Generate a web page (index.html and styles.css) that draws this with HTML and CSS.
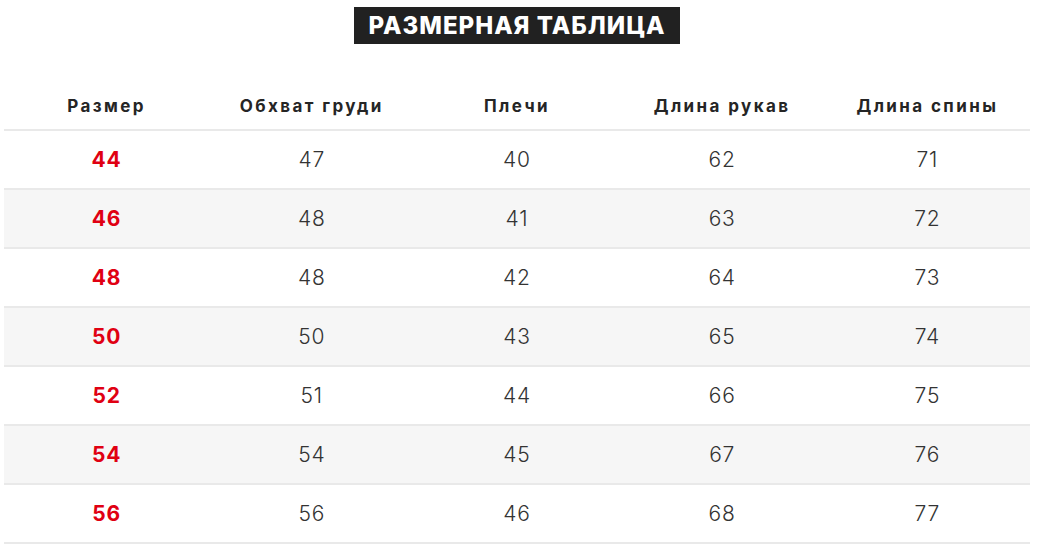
FILE: index.html
```html
<!DOCTYPE html>
<html lang="ru">
<head>
<meta charset="utf-8">
<link rel="stylesheet" href="styles.css">
</head>
<body>
<div class="page">
  <div class="title-wrap"><h1 class="title">РАЗМЕРНАЯ ТАБЛИЦА</h1></div>
  <table class="sizes">
    <thead>
      <tr><th>Размер</th><th>Обхват груди</th><th>Плечи</th><th>Длина рукав</th><th>Длина спины</th></tr>
    </thead>
    <tbody>
      <tr><td class="size">44</td><td>47</td><td>40</td><td>62</td><td>71</td></tr>
      <tr><td class="size">46</td><td>48</td><td>41</td><td>63</td><td>72</td></tr>
      <tr><td class="size">48</td><td>48</td><td>42</td><td>64</td><td>73</td></tr>
      <tr><td class="size">50</td><td>50</td><td>43</td><td>65</td><td>74</td></tr>
      <tr><td class="size">52</td><td>51</td><td>44</td><td>66</td><td>75</td></tr>
      <tr><td class="size">54</td><td>54</td><td>45</td><td>67</td><td>76</td></tr>
      <tr><td class="size">56</td><td>56</td><td>46</td><td>68</td><td>77</td></tr>
    </tbody>
  </table>
</div>
</body>
</html>
```
FILE: styles.css
```css
html, body {
  margin: 0;
  padding: 0;
  background: #fff;
}
.page {
  width: 1026px;
  margin-left: 4px;
  font-family: "Inter", "DejaVu Sans", sans-serif;
  color: #333;
}
.title-wrap {
  display: flex;
  justify-content: center;
  padding-top: 7px;
}
.title {
  margin: 0;
  background: #212121;
  color: #fff;
  font-size: 24px;
  font-weight: 800;
  line-height: 37px;
  padding: 0;
  width: 326px;
  box-sizing: border-box;
  text-align: center;
  letter-spacing: 1px;
}
.sizes {
  width: 100%;
  margin-top: 38px;
  border-collapse: collapse;
  table-layout: fixed;
}
.sizes th {
  height: 47px;
  padding: 0;
  font-size: 17px;
  font-weight: 700;
  letter-spacing: 2.4px;
  color: #252525;
  text-align: center;
  vertical-align: middle;
  border-bottom: 2px solid #e9e9e9;
}
.sizes td {
  height: 57px;
  padding: 0;
  text-align: center;
  vertical-align: middle;
  font-size: 21px;
  font-weight: 300;
  letter-spacing: 0.8px;
  color: #333;
  border-bottom: 2px solid #e9e9e9;
}
.sizes tbody tr:nth-child(even) td {
  background: #f6f6f6;
}
.sizes td.size {
  color: #e00012;
  font-weight: 700;
}
```
